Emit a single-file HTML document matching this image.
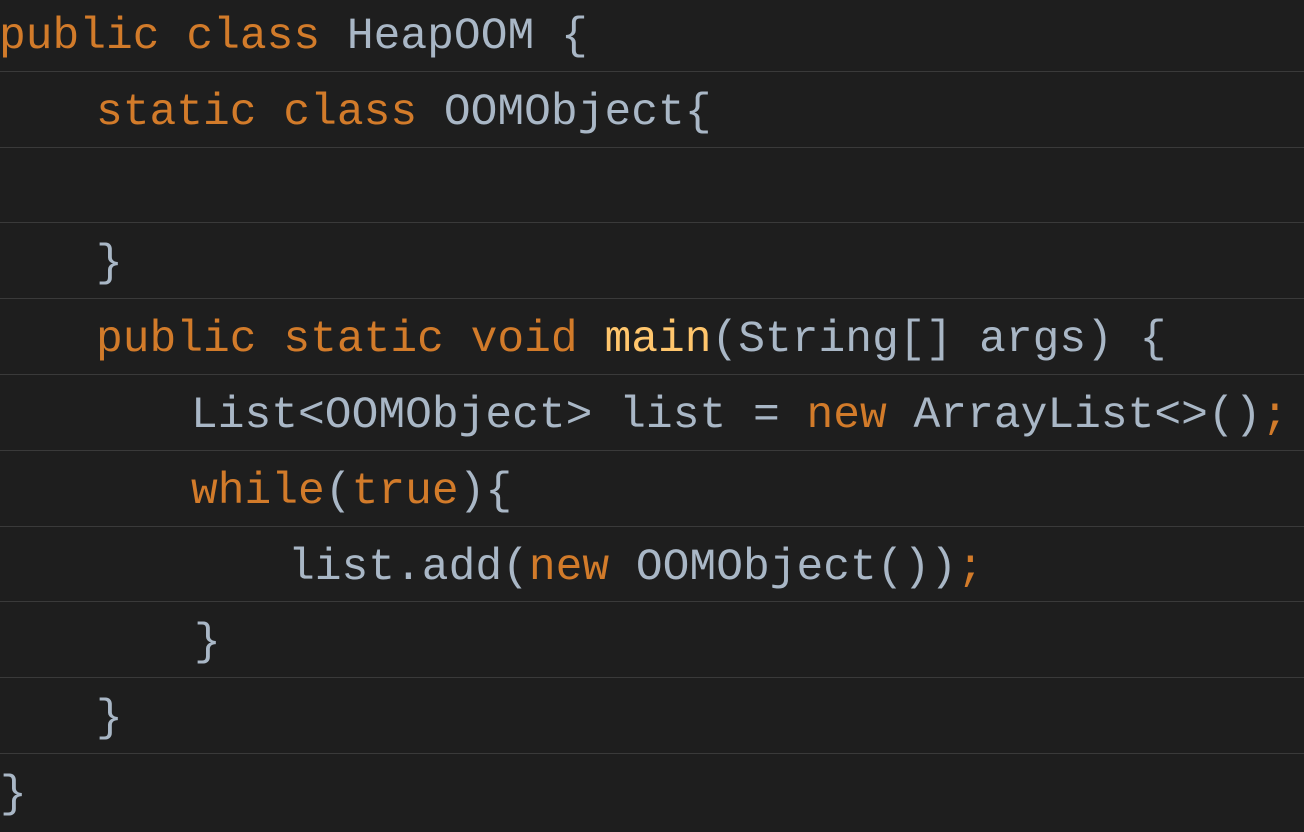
<!DOCTYPE html>
<html><head><meta charset="utf-8"><style>
html,body{margin:0;padding:0;background:#1e1e1e;width:1304px;height:832px;overflow:hidden;}
.wrap{position:absolute;top:-4px;left:0;width:1304px;}
.r{position:relative;height:74.8px;border-bottom:1px solid #3a3a3a;font-family:"Liberation Mono","DejaVu Sans Mono",monospace;font-size:44.6px;color:#a9b7c6;white-space:pre;}
.r span.t{position:absolute;top:16px;}
.k{color:#d27b2a}.f{color:#ffc66d}
</style></head><body><div class="wrap">
<div class="r"><span class="t" style="left:-1px"><span class="k">public class </span>HeapOOM {</span></div>
<div class="r"><span class="t" style="left:96px"><span class="k">static class </span>OOMObject{</span></div>
<div class="r"></div>
<div class="r"><span class="t" style="left:96px">}</span></div>
<div class="r"><span class="t" style="left:96px"><span class="k">public static void </span><span class="f">main</span>(String[] args) {</span></div>
<div class="r"><span class="t" style="left:191px">List&lt;OOMObject&gt; list = <span class="k">new </span>ArrayList&lt;&gt;()<span class="k">;</span></span></div>
<div class="r"><span class="t" style="left:191px"><span class="k">while</span>(<span class="k">true</span>){</span></div>
<div class="r"><span class="t" style="left:288px">list.add(<span class="k">new </span>OOMObject())<span class="k">;</span></span></div>
<div class="r"><span class="t" style="left:194px">}</span></div>
<div class="r"><span class="t" style="left:96px">}</span></div>
<div class="r" style="border-bottom:none"><span class="t" style="left:0px">}</span></div>
</div></body></html>
